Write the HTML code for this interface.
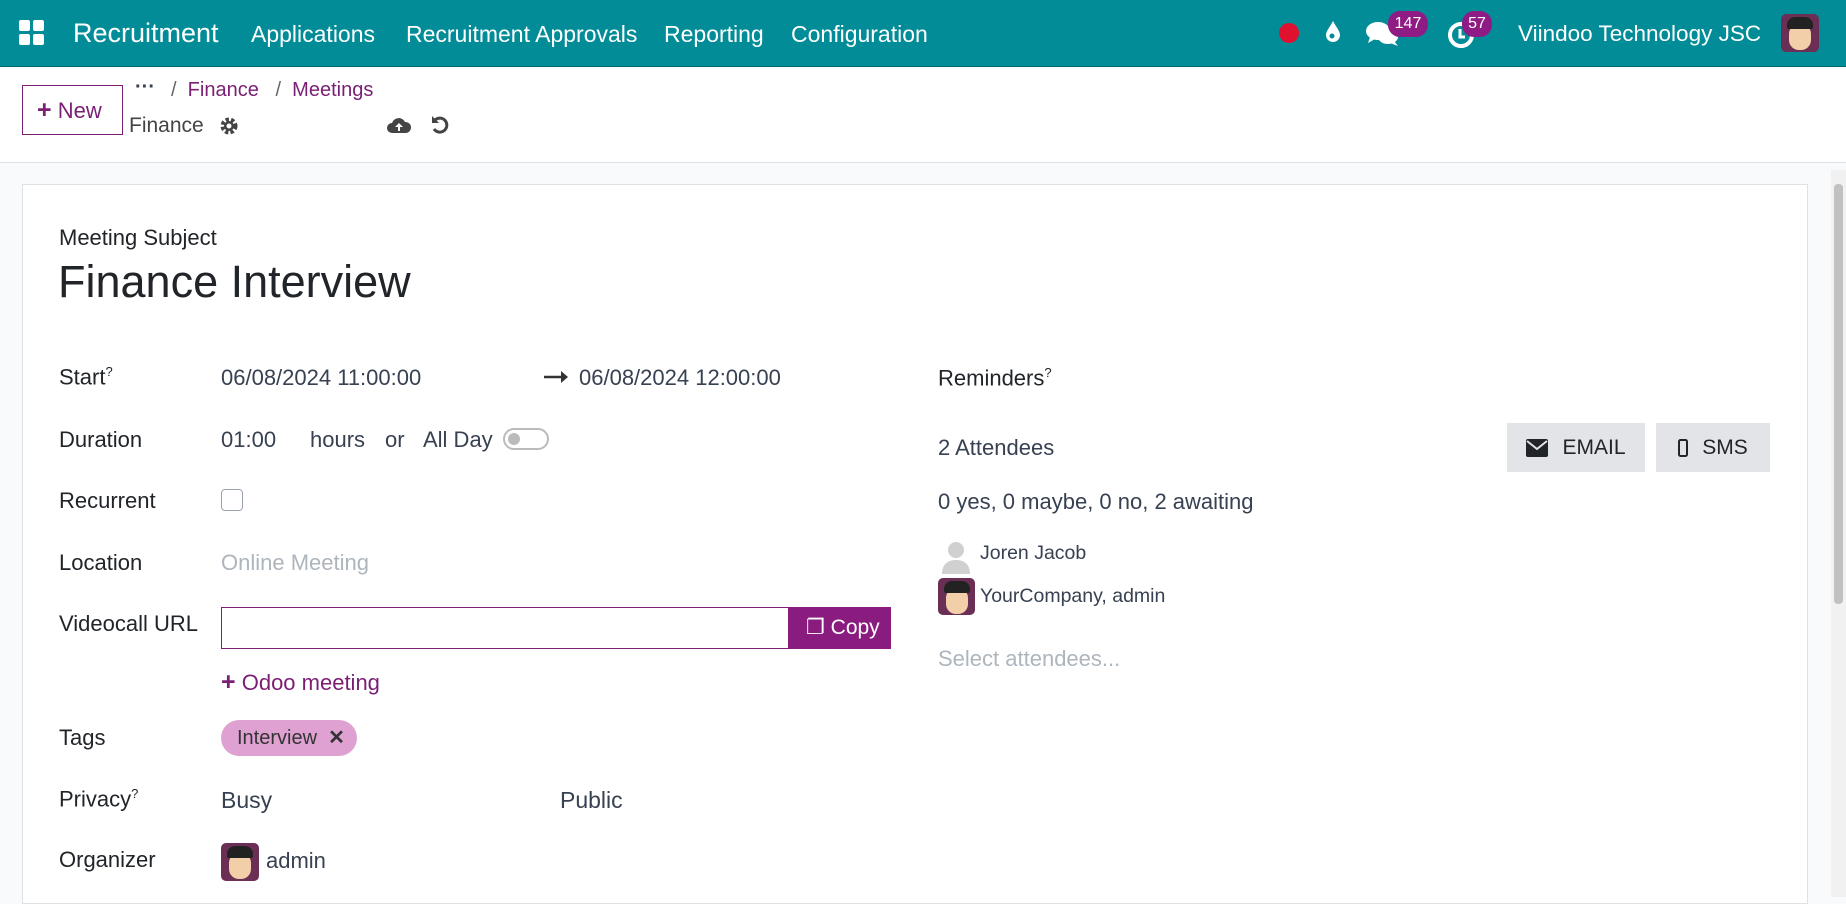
<!DOCTYPE html>
<html><head><meta charset="utf-8"><style>
*{box-sizing:border-box;margin:0;padding:0}
body{width:1846px;height:897px;overflow:hidden;font-family:"Liberation Sans",sans-serif;background:#f9fafb;color:#374151;position:relative}
.a{position:absolute;white-space:nowrap}
.nav{position:absolute;left:0;top:0;width:1846px;height:67px;background:#018c98;border-bottom:1px solid #016a74}
.nav .a{color:#fff;font-size:23px;top:20px}
.cp{position:absolute;left:0;top:67px;width:1846px;height:96px;background:#fff;border-bottom:1px solid #dee2e6}
.card{position:absolute;left:22px;top:184px;width:1786px;height:720px;background:#fff;border:1px solid #dee2e6}
.lbl{font-size:22px;color:#212529}
.val{font-size:22px;color:#374151}
.pur{color:#7a1f74}
sup{font-size:13px}
.badge{position:absolute;background:#8e1c84;color:#fff;font-size:16px;border-radius:12px;height:26px;line-height:26px;text-align:center}
.btn{position:absolute;background:#e2e4e8;color:#212529;font-size:21px;display:flex;align-items:center;justify-content:center;gap:14px}
</style></head><body>
<div class="nav">
 <svg class="a" style="left:19px;top:20px" width="26" height="26" viewBox="0 0 26 26" fill="#fff"><rect x="0" y="0" width="11" height="11" rx="2"/><rect x="14" y="0" width="11" height="11" rx="2"/><rect x="0" y="14" width="11" height="11" rx="2"/><rect x="14" y="14" width="11" height="11" rx="2"/></svg>
 <div class="a" style="left:73px;top:18px;font-size:27px">Recruitment</div>
 <div class="a" style="left:251px;top:21px">Applications</div>
 <div class="a" style="left:406px;top:21px">Recruitment Approvals</div>
 <div class="a" style="left:664px;top:21px">Reporting</div>
 <div class="a" style="left:791px;top:21px">Configuration</div>
 <div class="a" style="left:1279px;top:23px;width:20px;height:20px;border-radius:50%;background:#e0102f"></div>
 <svg class="a" style="left:1324px;top:20px" width="18" height="24" viewBox="0 0 18 24"><path d="M9 1C6 7 2 11 2 15a7 7 0 0 0 14 0C16 11 12 7 9 1z" fill="#fff"/><circle cx="8" cy="16" r="2.5" fill="#018c98"/></svg>
 <svg class="a" style="left:1366px;top:20px" width="34" height="28" viewBox="0 0 34 28" fill="#fff"><ellipse cx="12" cy="11" rx="12" ry="9"/><path d="M4 17l-2 6 7-4z"/><ellipse cx="22" cy="17" rx="10" ry="7"/><path d="M28 21l4 5-8-3z"/></svg>
 <div class="badge" style="left:1388px;top:11px;width:40px">147</div>
 <svg class="a" style="left:1447px;top:21px" width="28" height="28" viewBox="0 0 28 28"><circle cx="14" cy="14" r="11" fill="none" stroke="#fff" stroke-width="4"/><path d="M13 8v8h5" stroke="#fff" stroke-width="3" fill="none"/></svg>
 <div class="badge" style="left:1462px;top:11px;width:30px">57</div>
 <div class="a" style="left:1518px;top:21px;font-size:22.5px">Viindoo Technology JSC</div>
 <div class="a" style="left:1781px;top:14px;width:38px;height:38px;border-radius:5px;background:#6b2f55;overflow:hidden"><div style="position:absolute;left:8px;top:10px;width:22px;height:26px;border-radius:10px;background:#f2cfa8"></div><div style="position:absolute;left:6px;top:3px;width:26px;height:12px;border-radius:8px 8px 2px 2px;background:#222"></div></div>
</div>
<div class="cp">
 <div class="a" style="left:22px;top:18px;width:101px;height:50px;border:1px solid #7a1f74;font-size:22px;color:#7a1f74;line-height:48px;padding-left:14px"><b style="font-size:25px">+</b> New</div>
 <div class="a" style="left:135px;top:9px;font-size:20px;color:#374151"><b>···</b></div>
 <div class="a" style="left:171px;top:12px;font-size:20px;color:#666">/ &nbsp;<span class="pur">Finance</span> &nbsp; / &nbsp;<span class="pur">Meetings</span></div>
 <div class="a" style="left:129px;top:47px;font-size:21px;color:#444">Finance</div>
 <svg class="a" style="left:219px;top:49px" width="20" height="20" viewBox="0 0 20 20"><circle cx="10" cy="10" r="6" fill="none" stroke="#444" stroke-width="5" stroke-dasharray="3 2"/><circle cx="10" cy="10" r="5" fill="#444"/><circle cx="10" cy="10" r="2.5" fill="#fff"/></svg>
 <svg class="a" style="left:386px;top:48px" width="26" height="20" viewBox="0 0 26 20"><path d="M6 18a5 5 0 0 1 0-10 7 7 0 0 1 13-1 5.5 5.5 0 0 1 1 11z" fill="#444"/><path d="M13 8l-4 4h3v4h2v-4h3z" fill="#fff"/></svg>
 <svg class="a" style="left:430px;top:47px" width="20" height="22" viewBox="0 0 20 22"><path d="M5 6a7 7 0 1 1-1 9" fill="none" stroke="#444" stroke-width="3"/><path d="M2 2v7h7z" fill="#444"/></svg>
</div>
<div class="a" style="left:1831px;top:170px;width:15px;height:727px;background:#f1f1f1"><div style="position:absolute;left:3px;top:14px;width:9px;height:420px;background:#c1c1c1;border-radius:4px"></div></div>
<div class="card"></div>

<div class="a" style="left:59px;top:225px;font-size:22px;color:#212529">Meeting Subject</div>
<div class="a" style="left:58px;top:256px;font-size:45px;color:#212529">Finance Interview</div>

<div class="a lbl" style="left:59px;top:364px">Start<sup>?</sup></div>
<div class="a val" style="left:221px;top:365px">06/08/2024 11:00:00</div>
<svg class="a" style="left:544px;top:370px" width="25" height="14" viewBox="0 0 25 14"><path d="M0 7h18" stroke="#333" stroke-width="2.5"/><path d="M17 1l7 6-7 6z" fill="#333"/></svg>
<div class="a val" style="left:579px;top:365px">06/08/2024 12:00:00</div>

<div class="a lbl" style="left:59px;top:427px">Duration</div>
<div class="a val" style="left:221px;top:427px">01:00</div>
<div class="a val" style="left:310px;top:427px">hours</div>
<div class="a val" style="left:385px;top:427px">or</div>
<div class="a val" style="left:423px;top:427px">All Day</div>
<div class="a" style="left:503px;top:428px;width:46px;height:22px;border:2px solid #bbb;border-radius:11px"><div style="position:absolute;left:3px;top:3px;width:12px;height:12px;border-radius:50%;background:#bbb"></div></div>

<div class="a lbl" style="left:59px;top:488px">Recurrent</div>
<div class="a" style="left:221px;top:489px;width:22px;height:22px;border:1px solid #9ca3af;border-radius:4px"></div>

<div class="a lbl" style="left:59px;top:550px">Location</div>
<div class="a val" style="left:221px;top:550px;color:#adb5bd">Online Meeting</div>

<div class="a lbl" style="left:59px;top:611px">Videocall URL</div>
<div class="a" style="left:221px;top:607px;width:670px;height:42px;border:1px solid #7a1f74"></div>
<div class="a" style="left:788px;top:607px;width:103px;height:42px;background:#8a1c80;color:#fff;font-size:21px;line-height:42px;padding-left:18px">❐ Copy</div>

<div class="a val pur" style="left:221px;top:668px"><b style="font-size:25px">+</b> Odoo meeting</div>

<div class="a lbl" style="left:59px;top:725px">Tags</div>
<div class="a" style="left:221px;top:720px;width:136px;height:36px;border-radius:18px;background:#dea1d2;font-size:20px;line-height:36px;padding-left:16px;color:#333">Interview &nbsp;<b>✕</b></div>

<div class="a lbl" style="left:59px;top:786px">Privacy<sup>?</sup></div>
<div class="a val" style="left:221px;top:787px;font-size:23px">Busy</div>
<div class="a val" style="left:560px;top:787px;font-size:23px">Public</div>

<div class="a lbl" style="left:59px;top:847px">Organizer</div>
<div class="a" style="left:221px;top:843px;width:38px;height:38px;border-radius:5px;background:#6b2f55;overflow:hidden"><div style="position:absolute;left:8px;top:10px;width:22px;height:26px;border-radius:10px;background:#f2cfa8"></div><div style="position:absolute;left:6px;top:3px;width:26px;height:12px;border-radius:8px 8px 2px 2px;background:#222"></div></div>
<div class="a val" style="left:266px;top:848px">admin</div>

<div class="a lbl" style="left:938px;top:365px">Reminders<sup>?</sup></div>
<div class="a val" style="left:938px;top:435px">2 Attendees</div>
<div class="btn" style="left:1507px;top:423px;width:138px;height:49px"><svg width="22" height="18" viewBox="0 0 22 18"><rect width="22" height="18" rx="2" fill="#212529"/><path d="M1 2l10 8 10-8" stroke="#e2e4e8" stroke-width="2" fill="none"/></svg>EMAIL</div>
<div class="btn" style="left:1656px;top:423px;width:114px;height:49px"><svg width="10" height="18" viewBox="0 0 10 18"><rect x="1" y="1" width="8" height="16" rx="1.5" fill="none" stroke="#212529" stroke-width="2"/></svg>SMS</div>
<div class="a val" style="left:938px;top:489px">0 yes, 0 maybe, 0 no, 2 awaiting</div>
<svg class="a" style="left:940px;top:540px" width="32" height="34" viewBox="0 0 32 34" fill="#d0d0d0"><circle cx="16" cy="10" r="8"/><path d="M2 34c0-10 6-14 14-14s14 4 14 14z"/></svg>
<div class="a val" style="left:980px;top:542px;font-size:19.5px">Joren Jacob</div>
<div class="a" style="left:938px;top:578px;width:37px;height:37px;border-radius:5px;background:#6b2f55;overflow:hidden"><div style="position:absolute;left:8px;top:10px;width:22px;height:26px;border-radius:10px;background:#f2cfa8"></div><div style="position:absolute;left:6px;top:3px;width:26px;height:12px;border-radius:8px 8px 2px 2px;background:#222"></div></div>
<div class="a val" style="left:980px;top:585px;font-size:19.5px">YourCompany, admin</div>
<div class="a val" style="left:938px;top:646px;color:#adb5bd">Select attendees...</div>
</body></html>
